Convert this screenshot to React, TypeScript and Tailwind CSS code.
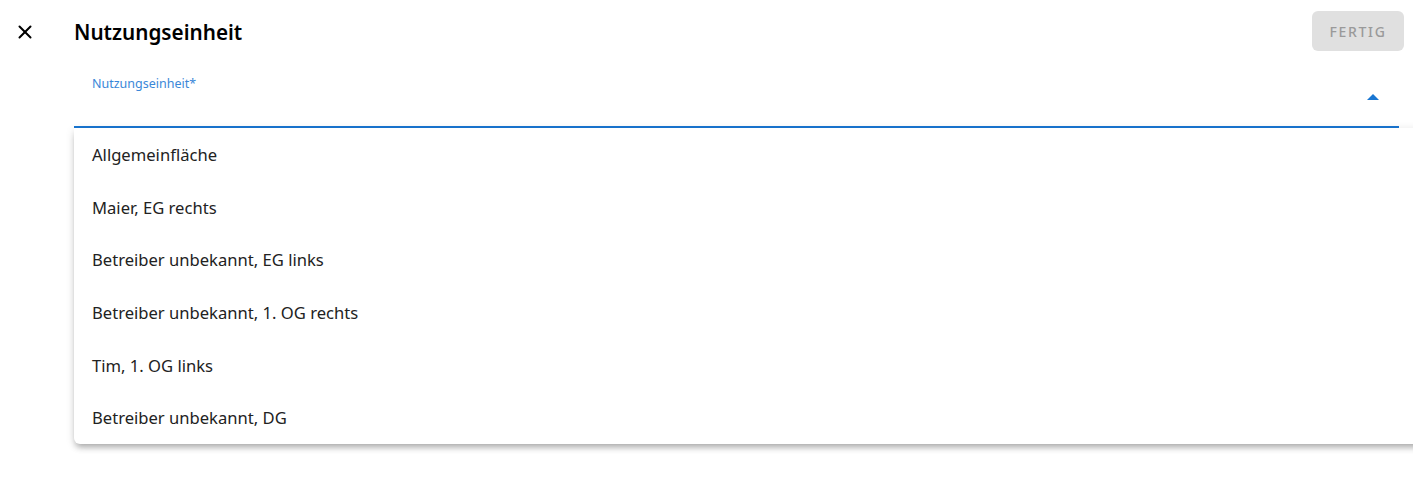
import { X } from "lucide-react";

const options = [
  "Allgemeinfläche",
  "Maier, EG rechts",
  "Betreiber unbekannt, EG links",
  "Betreiber unbekannt, 1. OG rechts",
  "Tim, 1. OG links",
  "Betreiber unbekannt, DG",
];

export default function App() {
  return (
    <div className="relative h-[491px] w-[1413px] overflow-hidden bg-white font-['Noto_Sans','Open_Sans',sans-serif] text-[#212121]">
      {/* header */}
      <div className="flex h-[62px] items-center pl-[13px] pr-[9px]">
        <button type="button" className="mt-[1px] flex h-6 w-6 items-center justify-center text-black">
          <X size={22} strokeWidth={2.2} />
        </button>
        <h1 className="ml-[37px] mt-[2px] flex-1 text-[20.7px] font-semibold leading-none text-black">
          Nutzungseinheit
        </h1>
        <button
          type="button"
          className="h-[40px] w-[92px] rounded-md bg-[#e0e0e0] text-[14px] font-medium tracking-[0.12em] text-[#9a9a9a]"
        >
          FERTIG
        </button>
      </div>

      {/* select field */}
      <div className="ml-[74px] mr-[14px]">
        <div className="relative h-[66px] border-b-2 border-[#1976d2]">
          <span className="absolute left-[18px] top-[16px] text-[12.5px] leading-none text-[#3a87d8]">
            Nutzungseinheit*
          </span>
          <svg
            className="absolute right-[20px] top-[32px]"
            width="12"
            height="6"
            viewBox="0 0 12 6"
          >
            <path d="M0 6 L6 0 L12 6 Z" fill="#1976d2" />
          </svg>
        </div>
      </div>

      {/* dropdown menu */}
      <div className="absolute left-[74px] top-[128px] w-[1400px] rounded-b-md bg-white shadow-[0_5px_6px_-2px_rgba(0,0,0,0.28),0_2px_10px_0_rgba(0,0,0,0.12)]">
        {options.map((option) => (
          <div
            key={option}
            className="flex h-[52.67px] items-center pl-[18px] pt-[2px] text-[16.6px] text-[#222]"
          >
            {option}
          </div>
        ))}
      </div>
    </div>
  );
}
